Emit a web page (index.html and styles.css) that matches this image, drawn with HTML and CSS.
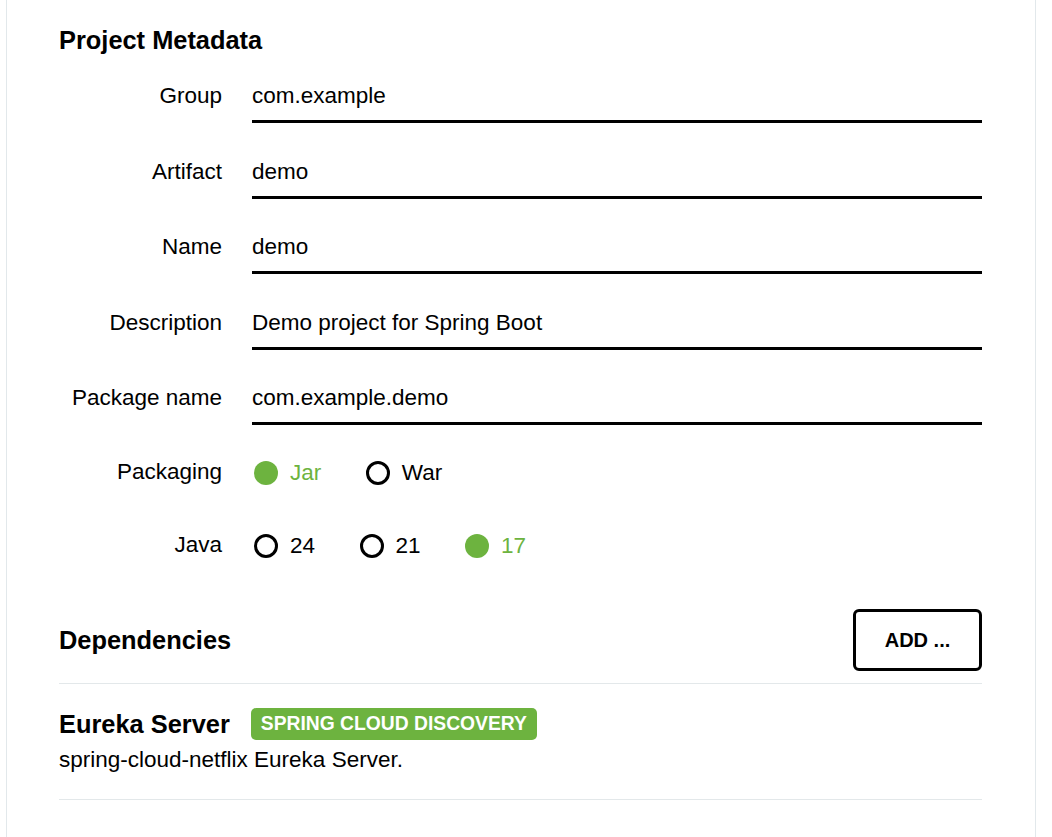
FILE: index.html
```html
<!DOCTYPE html>
<html lang="en">
<head>
<meta charset="utf-8">
<title>Project Metadata</title>
<link rel="stylesheet" href="styles.css">
</head>
<body>
<div class="panel">
  <h2 class="section-title">Project Metadata</h2>
  <div class="fields">
    <div class="field">
      <label class="field-label">Group</label>
      <div class="field-input">com.example</div>
    </div>
    <div class="field">
      <label class="field-label">Artifact</label>
      <div class="field-input">demo</div>
    </div>
    <div class="field">
      <label class="field-label">Name</label>
      <div class="field-input">demo</div>
    </div>
    <div class="field">
      <label class="field-label">Description</label>
      <div class="field-input">Demo project for Spring Boot</div>
    </div>
    <div class="field">
      <label class="field-label">Package name</label>
      <div class="field-input">com.example.demo</div>
    </div>
  </div>
  <div class="radio-rows">
    <div class="field radio-field">
      <span class="field-label">Packaging</span>
      <div class="radio-group">
        <span class="radio checked"><span class="dot"></span>Jar</span>
        <span class="radio"><span class="dot"></span>War</span>
      </div>
    </div>
    <div class="field radio-field">
      <span class="field-label">Java</span>
      <div class="radio-group">
        <span class="radio"><span class="dot"></span>24</span>
        <span class="radio"><span class="dot"></span>21</span>
        <span class="radio checked"><span class="dot"></span>17</span>
      </div>
    </div>
  </div>
  <div class="deps-head">
    <h2 class="section-title">Dependencies</h2>
    <button class="add-btn" type="button">ADD ...</button>
  </div>
  <div class="dep">
    <div class="dep-title">
      <strong class="dep-name">Eureka Server</strong>
      <span class="badge">SPRING CLOUD DISCOVERY</span>
    </div>
    <div class="dep-desc">spring-cloud-netflix Eureka Server.</div>
  </div>
</div>
</body>
</html>
```

FILE: styles.css
```css
* { box-sizing: border-box; }

html, body {
  margin: 0;
  padding: 0;
  background: #fff;
  color: #000;
  font-family: "Liberation Sans", Arial, sans-serif;
}

.panel {
  margin-left: 6px;
  width: 1030px;
  min-height: 100vh;
  border-left: 1px solid #e2e8eb;
  border-right: 1px solid #e2e8eb;
  padding: 25px 53px 0 52px;
}

.section-title {
  margin: 0;
  font-size: 25.4px;
  line-height: 30px;
  font-weight: bold;
}

.fields {
  margin-top: 28px;
  display: flex;
  flex-direction: column;
  gap: 35.5px;
}

.field {
  display: grid;
  grid-template-columns: 163px 730px;
  column-gap: 30px;
  align-items: start;
}

.field-label {
  text-align: right;
  font-size: 22.5px;
  line-height: 25px;
}

.field-input {
  font-size: 22.5px;
  line-height: 25px;
  padding-bottom: 12px;
  border-bottom: 3px solid #000;
}

.radio-rows {
  margin-top: 34px;
  display: flex;
  flex-direction: column;
  gap: 47px;
}

.radio-group {
  display: flex;
  gap: 44.5px;
  padding-left: 2px;
  padding-top: 2px;
}

.radio {
  display: flex;
  align-items: center;
  gap: 12px;
  font-size: 22.5px;
  line-height: 24px;
}

.dot {
  width: 24px;
  height: 24px;
  border-radius: 50%;
  border: 3px solid #000;
  flex: none;
}

.radio.checked { color: #6db33f; }
.radio.checked .dot {
  border: none;
  background: #6db33f;
}

.deps-head {
  margin-top: 51px;
  display: flex;
  justify-content: space-between;
  align-items: center;
  padding-bottom: 12px;
  border-bottom: 1px solid #e3e8ea;
}

.add-btn {
  width: 129px;
  height: 62px;
  flex: none;
  border: 3px solid #000;
  border-radius: 6px;
  background: #fff;
  font-family: "Liberation Sans", Arial, sans-serif;
  font-size: 20px;
  font-weight: bold;
  color: #000;
  padding: 0;
}

.dep {
  padding: 24px 0 27px;
  border-bottom: 1px solid #e3e8ea;
}

.dep-title {
  display: flex;
  align-items: center;
  gap: 21px;
}

.dep-name {
  font-size: 25.4px;
  line-height: 32px;
}

.badge {
  background: #6db33f;
  color: #fff;
  font-weight: bold;
  font-size: 19.3px;
  line-height: 32px;
  height: 32px;
  padding: 0 10px;
  border-radius: 5px;
}

.dep-desc {
  margin-top: 7px;
  font-size: 22.5px;
  line-height: 25px;
}
```
